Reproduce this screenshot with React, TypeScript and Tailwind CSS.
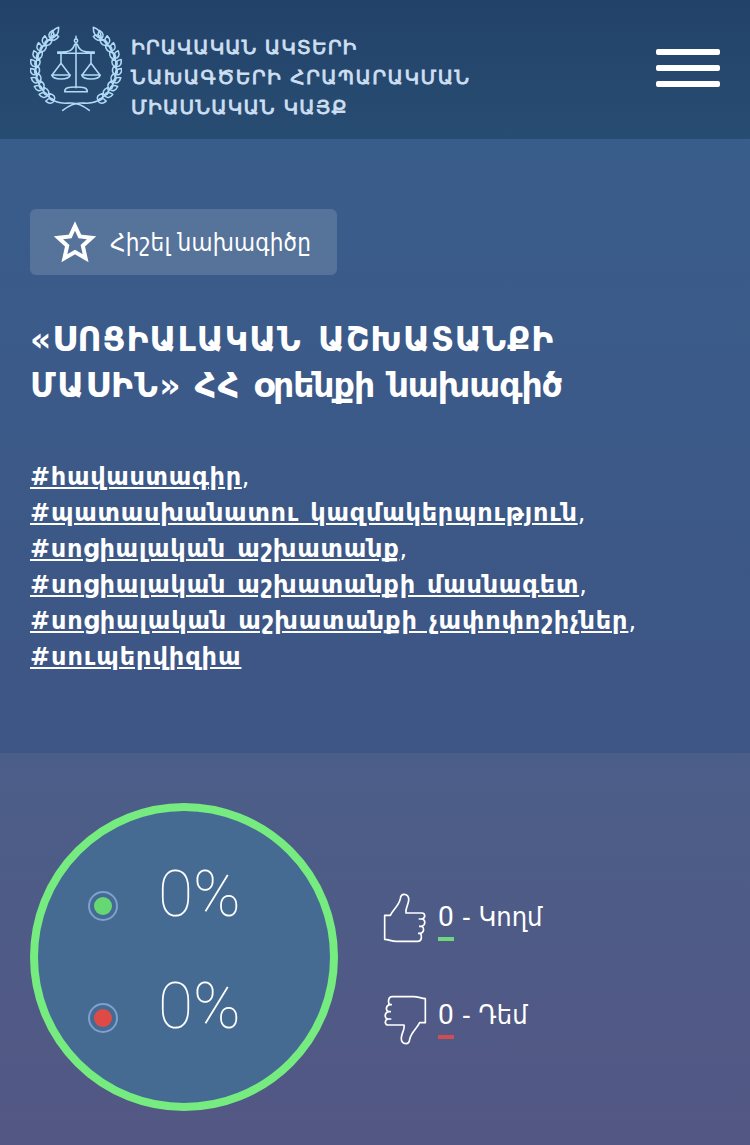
const tags = [
  { id: 1, label: '#հավաստագիր', tracking: 'tracking-[0.7px]' },
  { id: 2, label: '#պատասխանատու կազմակերպություն', tracking: 'tracking-[0.78px]' },
  { id: 3, label: '#սոցիալական աշխատանք', tracking: 'tracking-[0.76px]' },
  { id: 4, label: '#սոցիալական աշխատանքի մասնագետ', tracking: 'tracking-[0.77px]' },
  { id: 5, label: '#սոցիալական աշխատանքի չափոփոշիչներ', tracking: 'tracking-[0.86px]' },
  { id: 6, label: '#սուպերվիզիա', tracking: 'tracking-[0.95px]' }
];

// Leaves of one wreath branch: position on the stem and direction
const leaves = [-129, -141, -153, -165, -177, -189, -201, -213, -225, -237].flatMap((deg) => {
  const a = (deg * Math.PI) / 180;
  const x = 168 + 121 * Math.cos(a);
  const y = 160 + 115 * Math.sin(a);
  return [
    { x, y, rotate: deg + 90 - 38 },
    { x, y, rotate: deg + 90 + 24 }
  ];
});

function Branch() {
  return (
    <>
      <path d="M92 71A121 115 0 0 0 102 257C122 268 138 264 154 264C176 264 192 274 208 286" />
      <path d="M92 71C92 54 100 42 116 37C117 54 110 66 92 71Z" />
      {leaves.map((leaf, index) => (
        <path
          key={index}
          d="M0 0C5 -10 15 -10 25 0C15 10 5 10 0 0Z"
          transform={`translate(${leaf.x} ${leaf.y}) rotate(${leaf.rotate})`}
        />
      ))}
    </>
  );
}

function Emblem() {
  return (
    <svg width="92" height="86" viewBox="30 33 276 258" fill="none" stroke="#b0daf6" strokeWidth="4.6" strokeLinecap="round" strokeLinejoin="round">
      <Branch />
      <g transform="translate(336 0) scale(-1 1)">
        <Branch />
      </g>
      <circle cx="168" cy="77" r="5" />
      <path d="M168 64V71M168 83V218M113 111C145 113 158 108 164 88H172C178 108 191 113 223 111M113 115H223" />
      <path d="M123 115V145L98 178M123 145L148 178M95 180H151C146 196 100 196 95 180Z" />
      <path d="M213 115V145L188 178M213 145L238 178M185 180H241C236 196 190 196 185 180Z" />
      <path d="M134 230H202C202 218 190 216 168 216C146 216 134 218 134 230Z" />
    </svg>
  );
}

function Thumb({ className = '' }: { className?: string }) {
  return (
    <svg className={className} width="44" height="50" viewBox="0 0 132 150" fill="none" stroke="white" strokeWidth="5" strokeLinejoin="round">
      <path d="M5 67H22C30 50 48 38 52 17C53 8 57 4 63 4C73 4 78 12 77 22C75 39 66 47 69 60H117C126 60 129 73 118 78C128 81 128 96 117 100C124 105 124 118 112 121C118 128 116 145 105 145H40C27 145 18 140 5 139Z" />
      <path d="M107 78H118M108 100H117M105 121H112" />
    </svg>
  );
}

function Marker({ color }: { color: string }) {
  return (
    <span className="flex size-[30px] items-center justify-center rounded-full border-2 border-[#7e9fd0]">
      <span className={`size-[18px] rounded-full ${color}`} />
    </span>
  );
}

export default function App() {
  return (
    <div className="min-h-[1145px] w-full overflow-hidden bg-linear-to-b from-[#385f8d] to-[#405080] font-['DejaVu_Sans',sans-serif] text-white">
      {/* Header */}
      <header className="flex h-[139px] justify-between bg-linear-to-b from-[#234269] to-[#284d72] px-[30px]">
        <div className="flex pt-[26px]">
          <Emblem />
          <div className="ml-[9px] pt-1.5 text-[20px] leading-[30px] whitespace-nowrap text-[#cddff1] [-webkit-text-stroke:0.8px_#cddff1]">
            <p className="tracking-[1.05px]">ԻՐԱՎԱԿԱՆ ԱԿՏԵՐԻ</p>
            <p className="tracking-[1.45px]">ՆԱԽԱԳԾԵՐԻ ՀՐԱՊԱՐԱԿՄԱՆ</p>
            <p className="tracking-[1.2px]">ՄԻԱՍՆԱԿԱՆ ԿԱՅՔ</p>
          </div>
        </div>
        <button className="mt-[49px] flex h-[38px] w-16 flex-col justify-between">
          <span className="h-1.5 w-full rounded-xs bg-white" />
          <span className="h-1.5 w-full rounded-xs bg-white" />
          <span className="h-1.5 w-full rounded-xs bg-white" />
        </button>
      </header>

      {/* Draft title and tags */}
      <section className="h-[614px] px-[30px] pt-[70px]">
        <button className="flex h-[66px] w-[307px] items-center rounded-md bg-white/14 pl-6">
          <svg width="42" height="42" viewBox="0 0 42 42" fill="none" stroke="white" strokeWidth="4">
            <path d="M21 5L25.8 15.4L37.5 16.8L28.8 24.8L31.6 37.2L21 31L10.4 37.2L13.2 24.8L4.5 16.8L16.2 15.4Z" />
          </svg>
          <span className="mt-0.5 ml-3.5 font-['DejaVu_Sans_Condensed','DejaVu_Sans',sans-serif] text-2xl font-stretch-condensed tracking-[0.2px] whitespace-nowrap">Հիշել նախագիծը</span>
        </button>
        <h1 className="mt-[42px] text-[33px] leading-[46px] font-bold whitespace-nowrap">
          <span className="block tracking-[1px] [word-spacing:4px]">«ՍՈՑԻԱԼԱԿԱՆ ԱՇԽԱՏԱՆՔԻ</span>
          <span className="block">
            <span className="tracking-[1.4px]">ՄԱՍԻՆ» ՀՀ </span>
            <span className="tracking-[-1px] [word-spacing:3px]">օրենքի նախագիծ</span>
          </span>
        </h1>
        <ul className="mt-[50px] text-2xl leading-9 whitespace-nowrap">
          {tags.map((tag) => (
            <li key={tag.id}>
              <a className={`font-bold underline [word-spacing:2px] ${tag.tracking}`}>{tag.label}</a>
              {tag.id < tags.length && ','}
            </li>
          ))}
        </ul>
      </section>

      {/* Votes */}
      <section className="flex h-[392px] bg-linear-to-b from-[#4b5e89] to-[#535784] px-[30px] pt-[50px]">
        <div className="size-[308px] rounded-full border-8 border-[#75eb80] bg-[#466b93] pt-[39px] pl-[50px] font-['Roboto',sans-serif] text-[64px] leading-none font-thin">
          <div className="flex h-28 items-center">
            <Marker color="bg-[#66d873]" />
            <span className="ml-10 pb-[22px]">0%</span>
          </div>
          <div className="flex h-28 items-center">
            <Marker color="bg-[#de4b46]" />
            <span className="ml-10 pb-[22px]">0%</span>
          </div>
        </div>
        <div className="ml-[45px] pt-[90px] font-['DejaVu_Sans_Condensed','DejaVu_Sans',sans-serif] text-[27px] font-stretch-condensed whitespace-nowrap">
          <div className="flex h-[98px]">
            <Thumb />
            <span className="ml-[11px] h-12 w-4 border-b-4 border-[#6fd680] pt-2 font-['Roboto',sans-serif] text-[28px] leading-8 font-stretch-normal">0</span>
            <span className="ml-2 pt-2 leading-8">- Կողմ</span>
          </div>
          <div className="flex h-[98px]">
            <Thumb className="mt-1 rotate-180" />
            <span className="ml-[11px] h-12 w-4 border-b-4 border-[#cf4d54] pt-2 font-['Roboto',sans-serif] text-[28px] leading-8 font-stretch-normal">0</span>
            <span className="ml-2 pt-2 leading-8">- Դեմ</span>
          </div>
        </div>
      </section>
    </div>
  );
}
